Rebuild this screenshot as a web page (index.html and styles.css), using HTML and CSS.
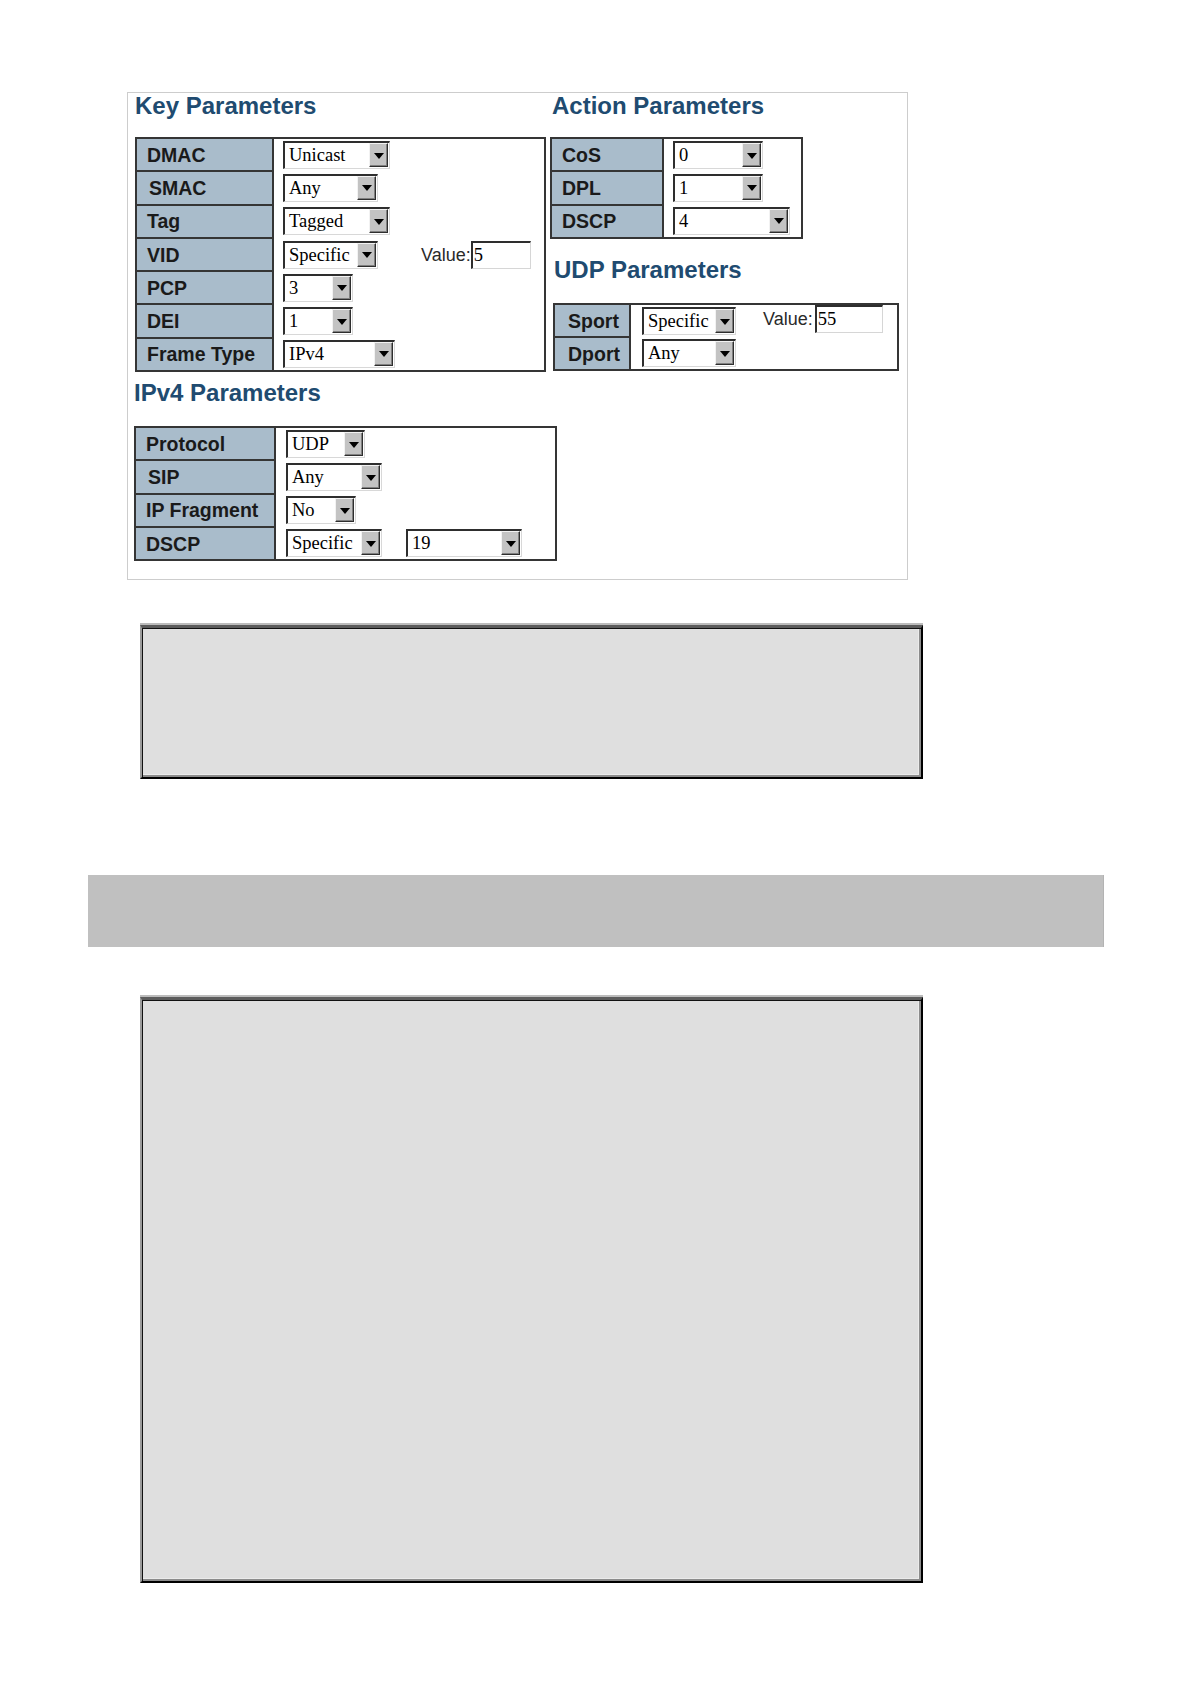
FILE: index.html
```html
<!DOCTYPE html>
<html lang="en">
<head>
<meta charset="utf-8">
<title>QoS Control Entry Parameters</title>
<link rel="stylesheet" href="styles.css">
</head>
<body>
<div class="page">
  <div class="panel">
    <div class="panel-row">
      <div class="col-left">
        <h2 class="h">Key Parameters</h2>
        <table class="ptable t-key">
          <tr><th>DMAC</th><td><span class="sel w107"><span class="sel-txt">Unicast</span><span class="sel-btn"></span></span></td></tr>
          <tr><th><span class="ind">SMAC</span></th><td><span class="sel w95"><span class="sel-txt">Any</span><span class="sel-btn"></span></span></td></tr>
          <tr><th>Tag</th><td><span class="sel w107"><span class="sel-txt">Tagged</span><span class="sel-btn"></span></span></td></tr>
          <tr><th>VID</th><td><span class="sel w95"><span class="sel-txt">Specific</span><span class="sel-btn"></span></span><span class="vlabel vk">Value:</span><span class="inp w60">5</span></td></tr>
          <tr><th>PCP</th><td><span class="sel w70"><span class="sel-txt">3</span><span class="sel-btn"></span></span></td></tr>
          <tr><th>DEI</th><td><span class="sel w70"><span class="sel-txt">1</span><span class="sel-btn"></span></span></td></tr>
          <tr><th>Frame Type</th><td><span class="sel w112"><span class="sel-txt">IPv4</span><span class="sel-btn"></span></span></td></tr>
        </table>
      </div>
      <div class="col-right">
        <h2 class="h h-action">Action Parameters</h2>
        <table class="ptable t-action">
          <tr><th>CoS</th><td><span class="sel w90"><span class="sel-txt">0</span><span class="sel-btn"></span></span></td></tr>
          <tr><th>DPL</th><td><span class="sel w90"><span class="sel-txt">1</span><span class="sel-btn"></span></span></td></tr>
          <tr><th>DSCP</th><td><span class="sel w117"><span class="sel-txt">4</span><span class="sel-btn"></span></span></td></tr>
        </table>
        <div class="udp">
          <h2 class="h h-udp">UDP Parameters</h2>
          <table class="ptable t-udp">
            <tr><th>Sport</th><td><span class="sel w94"><span class="sel-txt">Specific</span><span class="sel-btn"></span></span><span class="vlabel vu">Value:</span><span class="inp w68 iu">55</span></td></tr>
            <tr><th>Dport</th><td><span class="sel w94"><span class="sel-txt">Any</span><span class="sel-btn"></span></span></td></tr>
          </table>
        </div>
      </div>
    </div>
    <div class="ipv4">
      <h2 class="h">IPv4 Parameters</h2>
      <table class="ptable t-ipv4">
        <tr><th>Protocol</th><td><span class="sel w79"><span class="sel-txt">UDP</span><span class="sel-btn"></span></span></td></tr>
        <tr><th><span class="ind">SIP</span></th><td><span class="sel w96"><span class="sel-txt">Any</span><span class="sel-btn"></span></span></td></tr>
        <tr><th>IP Fragment</th><td><span class="sel w70"><span class="sel-txt">No</span><span class="sel-btn"></span></span></td></tr>
        <tr><th>DSCP</th><td><span class="sel w96"><span class="sel-txt">Specific</span><span class="sel-btn"></span></span><span class="sel w116 s2"><span class="sel-txt">19</span><span class="sel-btn"></span></span></td></tr>
      </table>
    </div>
  </div>

  <div class="gbox gbox-1"></div>
  <div class="gbar"></div>
  <div class="gbox gbox-2"></div>
</div>
</body>
</html>
```

FILE: styles.css
```css
html, body {
  margin: 0;
  padding: 0;
  background: #ffffff;
}

.page {
  padding: 92px 0 80px 88px;
  font-family: "Liberation Sans", Arial, sans-serif;
}

/* ---------- parameters panel ---------- */
.panel {
  margin-left: 39px;
  width: 781px;
  border: 1px solid #cdcdcd;
  padding: 0 0 18px 7px;
  box-sizing: border-box;
}

.panel-row {
  display: flex;
  align-items: flex-start;
  gap: 4px;
}

.col-left {
  width: 411px;
  flex: none;
}

.col-right {
  flex: none;
}

.h {
  margin: 0 0 18px 0;
  font: bold 24px/26px "Liberation Sans", Arial, sans-serif;
  color: #204b70;
  white-space: nowrap;
}

.h-action {
  padding-left: 2px;
}

.udp {
  margin-top: 18px;
  padding-left: 3px;
}

.h-udp {
  padding-left: 1px;
  margin-bottom: 20px;
}

.ipv4 {
  margin-top: 8px;
  margin-left: -1px;
}

.ipv4 .h {
  margin-bottom: 20px;
}

/* ---------- parameter tables ---------- */
.ptable {
  border-collapse: collapse;
  border: 2px solid #353535;
  background: #ffffff;
}

.ptable th {
  background: #a9bccb;
  border: 2px solid #353535;
  height: 33.3px;
  padding: 0 0 0 10px;
  text-align: left;
  font: bold 19.5px/22px "Liberation Sans", Arial, sans-serif;
  color: #1a1a1a;
  white-space: nowrap;
  box-sizing: border-box;
}

.ptable td {
  border: none;
  padding: 0 0 0 9px;
  white-space: nowrap;
  vertical-align: middle;
}

.ptable td > * {
  vertical-align: middle;
}

.ind {
  padding-left: 2px;
}

.t-key { width: 411px; }
.t-key th { width: 137px; }

.t-action { width: 253px; }
.t-action th { width: 112px; }

.t-udp { width: 346px; }
.t-udp th { width: 76px; padding-left: 13px; }
.t-udp td { padding-left: 11px; }

.t-ipv4 { width: 423px; }
.t-ipv4 th { width: 140px; }
.t-ipv4 td { padding-left: 10px; }

/* ---------- classic select widget ---------- */
.sel {
  display: inline-flex;
  box-sizing: border-box;
  height: 28px;
  border-style: solid;
  border-width: 2px 1px 1px 2px;
  border-color: #2e2e2e #d8d8d8 #d8d8d8 #2e2e2e;
  background: #ffffff;
  padding: 0 1px 1px 0;
}

.sel-txt {
  flex: 1;
  min-width: 0;
  overflow: hidden;
  padding-left: 4px;
  font: 18.5px/24px "Liberation Serif", "Times New Roman", serif;
  color: #000000;
  white-space: nowrap;
}

.sel-btn {
  flex: none;
  width: 19px;
  box-sizing: border-box;
  background: #c3c3c3;
  border: 1px solid;
  border-color: #f2f2f2 #2e2e2e #2e2e2e #f2f2f2;
  box-shadow: inset -1px -1px 0 #808080;
  display: flex;
  align-items: center;
  justify-content: center;
}

.sel-btn::after {
  content: "";
  width: 0;
  height: 0;
  border-left: 5px solid transparent;
  border-right: 5px solid transparent;
  border-top: 6px solid #000000;
  margin-top: 1px;
}

.w70 { width: 70px; }
.w79 { width: 79px; }
.w90 { width: 90px; }
.w94 { width: 94px; }
.w95 { width: 95px; }
.w96 { width: 96px; }
.w107 { width: 107px; }
.w112 { width: 112px; }
.w116 { width: 116px; }
.w117 { width: 117px; }

.s2 {
  margin-left: 24px;
}

/* ---------- value label + text input ---------- */
.vlabel {
  display: inline-block;
  font: 18px/24px "Liberation Sans", Arial, sans-serif;
  color: #2a2a2a;
}

.vk { margin-left: 43px; }
.vu { margin-left: 27px; position: relative; top: -2px; }

.inp {
  display: inline-block;
  box-sizing: border-box;
  height: 28px;
  border-style: solid;
  border-width: 2px 1px 1px 2px;
  border-color: #2e2e2e #d6d6d6 #d6d6d6 #2e2e2e;
  background: #ffffff;
  padding-left: 1px;
  font: 18.5px/24px "Liberation Serif", "Times New Roman", serif;
  color: #000000;
}

.w60 { width: 60px; }
.w68 { width: 68px; }
.iu { margin-left: 2px; position: relative; top: -2px; }

/* ---------- gray boxes ---------- */
.gbox {
  margin-left: 52px;
  width: 783px;
  box-sizing: border-box;
  background: #dfdfdf;
  border-style: solid;
  border-width: 3px 2px 2px 2px;
  border-color: #5c5c5c #000000 #000000 #9c9c9c;
  box-shadow: inset 1px 1px 0 #111111, inset -2px -2px 0 #8c8c8c, inset -3px -3px 0 #ebebeb, 0 -2px 0 #bcbcbc;
}

.gbox-1 {
  margin-top: 45px;
  height: 154px;
}

.gbar {
  margin-top: 96px;
  width: 1016px;
  height: 72px;
  background: #c0c0c0;
  box-shadow: inset -1px 0 0 #b3b3b3;
}

.gbox-2 {
  margin-top: 50px;
  height: 586px;
}
```
